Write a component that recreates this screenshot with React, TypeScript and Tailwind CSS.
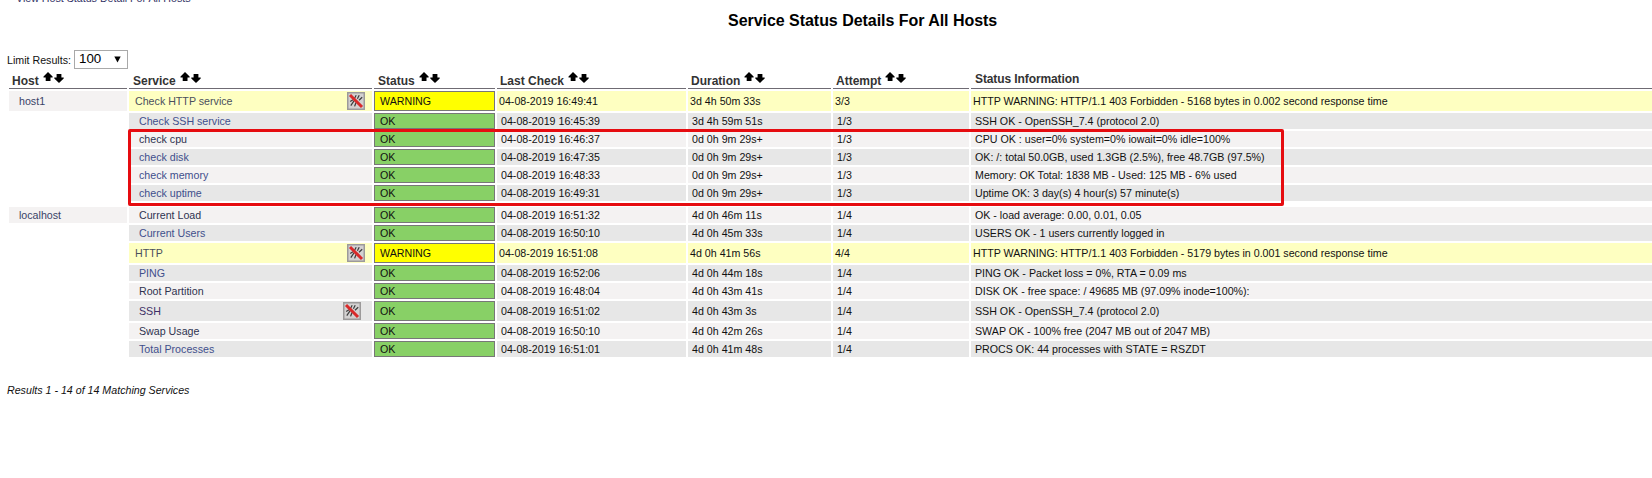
import React from "react";

type Kind = "warn" | "odd" | "even";

interface Row {
  host?: string;
  service: string;
  linkColor: string;
  icon?: boolean;
  kind: Kind;
  tall?: boolean;
  last: string;
  duration: string;
  attempt: string;
  info: string;
}

const BLUE = "text-[#3f4f8c]";
const NAVY = "text-[#2f3350]";

const host1: Row[] = [
  { host: "host1", service: "Check HTTP service", linkColor: "text-[#4a4f5c]", icon: true, kind: "warn", tall: true, last: "04-08-2019 16:49:41", duration: "3d 4h 50m 33s", attempt: "3/3", info: "HTTP WARNING: HTTP/1.1 403 Forbidden - 5168 bytes in 0.002 second response time" },
  { service: "Check SSH service", linkColor: BLUE, kind: "odd", last: "04-08-2019 16:45:39", duration: "3d 4h 59m 51s", attempt: "1/3", info: "SSH OK - OpenSSH_7.4 (protocol 2.0)" },
  { service: "check cpu", linkColor: NAVY, kind: "even", last: "04-08-2019 16:46:37", duration: "0d 0h 9m 29s+", attempt: "1/3", info: "CPU OK : user=0% system=0% iowait=0% idle=100%" },
  { service: "check disk", linkColor: BLUE, kind: "odd", last: "04-08-2019 16:47:35", duration: "0d 0h 9m 29s+", attempt: "1/3", info: "OK: /: total 50.0GB, used 1.3GB (2.5%), free 48.7GB (97.5%)" },
  { service: "check memory", linkColor: BLUE, kind: "even", last: "04-08-2019 16:48:33", duration: "0d 0h 9m 29s+", attempt: "1/3", info: "Memory: OK Total: 1838 MB - Used: 125 MB - 6% used" },
  { service: "check uptime", linkColor: BLUE, kind: "odd", last: "04-08-2019 16:49:31", duration: "0d 0h 9m 29s+", attempt: "1/3", info: "Uptime OK: 3 day(s) 4 hour(s) 57 minute(s)" },
];

const localhost: Row[] = [
  { host: "localhost", service: "Current Load", linkColor: NAVY, kind: "even", last: "04-08-2019 16:51:32", duration: "4d 0h 46m 11s", attempt: "1/4", info: "OK - load average: 0.00, 0.01, 0.05" },
  { service: "Current Users", linkColor: BLUE, kind: "odd", last: "04-08-2019 16:50:10", duration: "4d 0h 45m 33s", attempt: "1/4", info: "USERS OK - 1 users currently logged in" },
  { service: "HTTP", linkColor: "text-[#4a4f5c]", icon: true, kind: "warn", tall: true, last: "04-08-2019 16:51:08", duration: "4d 0h 41m 56s", attempt: "4/4", info: "HTTP WARNING: HTTP/1.1 403 Forbidden - 5179 bytes in 0.001 second response time" },
  { service: "PING", linkColor: BLUE, kind: "odd", last: "04-08-2019 16:52:06", duration: "4d 0h 44m 18s", attempt: "1/4", info: "PING OK - Packet loss = 0%, RTA = 0.09 ms" },
  { service: "Root Partition", linkColor: NAVY, kind: "even", last: "04-08-2019 16:48:04", duration: "4d 0h 43m 41s", attempt: "1/4", info: "DISK OK - free space: / 49685 MB (97.09% inode=100%):" },
  { service: "SSH", linkColor: "text-[#3d2f66]", icon: true, kind: "odd", tall: true, last: "04-08-2019 16:51:02", duration: "4d 0h 43m 3s", attempt: "1/4", info: "SSH OK - OpenSSH_7.4 (protocol 2.0)" },
  { service: "Swap Usage", linkColor: NAVY, kind: "even", last: "04-08-2019 16:50:10", duration: "4d 0h 42m 26s", attempt: "1/4", info: "SWAP OK - 100% free (2047 MB out of 2047 MB)" },
  { service: "Total Processes", linkColor: BLUE, kind: "odd", last: "04-08-2019 16:51:01", duration: "4d 0h 41m 48s", attempt: "1/4", info: "PROCS OK: 44 processes with STATE = RSZDT" },
];

const GRID = "grid w-[1652px] grid-cols-[118px_243px_121px_189px_143px_136px_1fr] gap-x-0.5 pl-[9px]";

const bg: Record<Kind, string> = {
  warn: "bg-[#feffc1]",
  odd: "bg-[#e7e7e7]",
  even: "bg-[#f4f2f2]",
};

function SortArrows() {
  return (
    <svg width="21" height="12" viewBox="0 0 21 12" className="mb-[5px] ml-1 shrink-0" fill="black">
      <path d="M5 1L9.6 5.6V6.5H7.5V10H2.7V6.5H0.5V5.6Z" />
      <path d="M16 12L11.3 7.4V6.5H13.6V3H18.4V6.5H20.7V7.4Z" />
    </svg>
  );
}

function DisabledIcon() {
  return (
    <svg width="18" height="18" viewBox="0 0 18 18" className="shrink-0">
      <rect x="0.75" y="0.75" width="16.5" height="16.5" fill="#d3d1d1" stroke="#9c9a9a" strokeWidth="1.5" />
      <g stroke="#3c3c3c" strokeWidth="1.2" fill="none">
        <path d="M9.2 3.2L7.6 6.2" />
        <path d="M12.2 3.2L10.4 6.8" />
        <path d="M15.2 5.2L12 8.2" />
        <path d="M7 8.8L3.8 13.6" />
        <path d="M9 10.5L7.6 14.4" />
        <path d="M3.2 9.4L6 7.8" />
      </g>
      <path d="M3 3L15 15" stroke="#d92a2a" strokeWidth="3" />
    </svg>
  );
}

function Heading({ label, sort = true, indent = "pl-[3px]" }: { label: string; sort?: boolean; indent?: string }) {
  return (
    <div className={`flex h-[18px] items-end border-b border-[#6f6b73] text-[12px] leading-[13px] font-bold text-[#333333] ${indent}`}>
      <span className={sort ? "" : "mb-0.5 tracking-[-0.1px]"}>{label}</span>
      {sort && <SortArrows />}
    </div>
  );
}

function ServiceRow({ row }: { row: Row }) {
  const warn = row.kind === "warn";
  const cell = `flex items-center ${bg[row.kind]} ${warn ? "pl-0.5" : "pl-1"}`;
  return (
    <div className={`${GRID} ${row.tall ? "h-5" : "h-4"}`}>
      <div className={row.host ? "flex items-center bg-[#f4f2f2] pl-2.5 text-[#3a4468]" : ""}>{row.host}</div>
      <div className={`flex items-center justify-between ${bg[row.kind]} ${warn ? "pr-[7px] pl-1.5" : "pr-[11px] pl-2.5"}`}>
        <span className={row.linkColor}>{row.service}</span>
        {row.icon && <DisabledIcon />}
      </div>
      <div className={`flex items-center border border-[#777777] pl-[5px] ${warn ? "bg-[#ffff00]" : "bg-[#88d066]"}`}>
        {warn ? "WARNING" : "OK"}
      </div>
      <div className={cell}>{row.last}</div>
      <div className={cell}>{row.duration}</div>
      <div className={cell}>{row.attempt}</div>
      <div className={cell}>{row.info}</div>
    </div>
  );
}

export default function App() {
  return (
    <div className="relative flex h-[478px] w-[1652px] flex-col overflow-hidden bg-white font-['Liberation_Sans',Arial,sans-serif] text-[10.67px] leading-[14px] whitespace-nowrap text-[#111111]">
      <div className="h-[11px] pl-4 text-[#333366]">
        <div className="-mt-[9px]">View Host Status Detail For All Hosts</div>
      </div>
      <h1 className="h-[39px] pl-[728px] text-[16px] leading-[20px] font-bold tracking-[-0.04px] text-black">Service Status Details For All Hosts</h1>
      <div className="flex h-[21px] pl-[7px]">
        <span className="mt-[3px] w-[67px]">Limit Results:</span>
        <div className="flex h-[19px] w-[54px] items-center justify-between border border-[#a9a9a9] pr-1.5 pb-px pl-1 text-[13.33px] text-black">
          <span>100</span>
          <svg width="7" height="7" viewBox="0 0 7 7">
            <path d="M0.3 0.5H6.7L3.5 6.5Z" />
          </svg>
        </div>
      </div>
      <div className={GRID}>
        <Heading label="Host" />
        <Heading label="Service" indent="pl-1" />
        <Heading label="Status" indent="pl-1" />
        <Heading label="Last Check" />
        <Heading label="Duration" />
        <Heading label="Attempt" />
        <Heading label="Status Information" sort={false} indent="pl-1" />
      </div>
      <div className="mt-0.5 flex flex-col gap-0.5">
        {host1.map((r) => <ServiceRow key={r.service} row={r} />)}
      </div>
      <div className="mt-1.5 flex flex-col gap-0.5">
        {localhost.map((r) => <ServiceRow key={r.service} row={r} />)}
      </div>
      <div className="mt-[26px] pl-[7px] italic">Results 1 - 14 of 14 Matching Services</div>
      <div className="absolute top-[129px] left-[128px] h-[77px] w-[1156px] rounded-[2px] border-3 border-[#e60c10]" />
    </div>
  );
}
